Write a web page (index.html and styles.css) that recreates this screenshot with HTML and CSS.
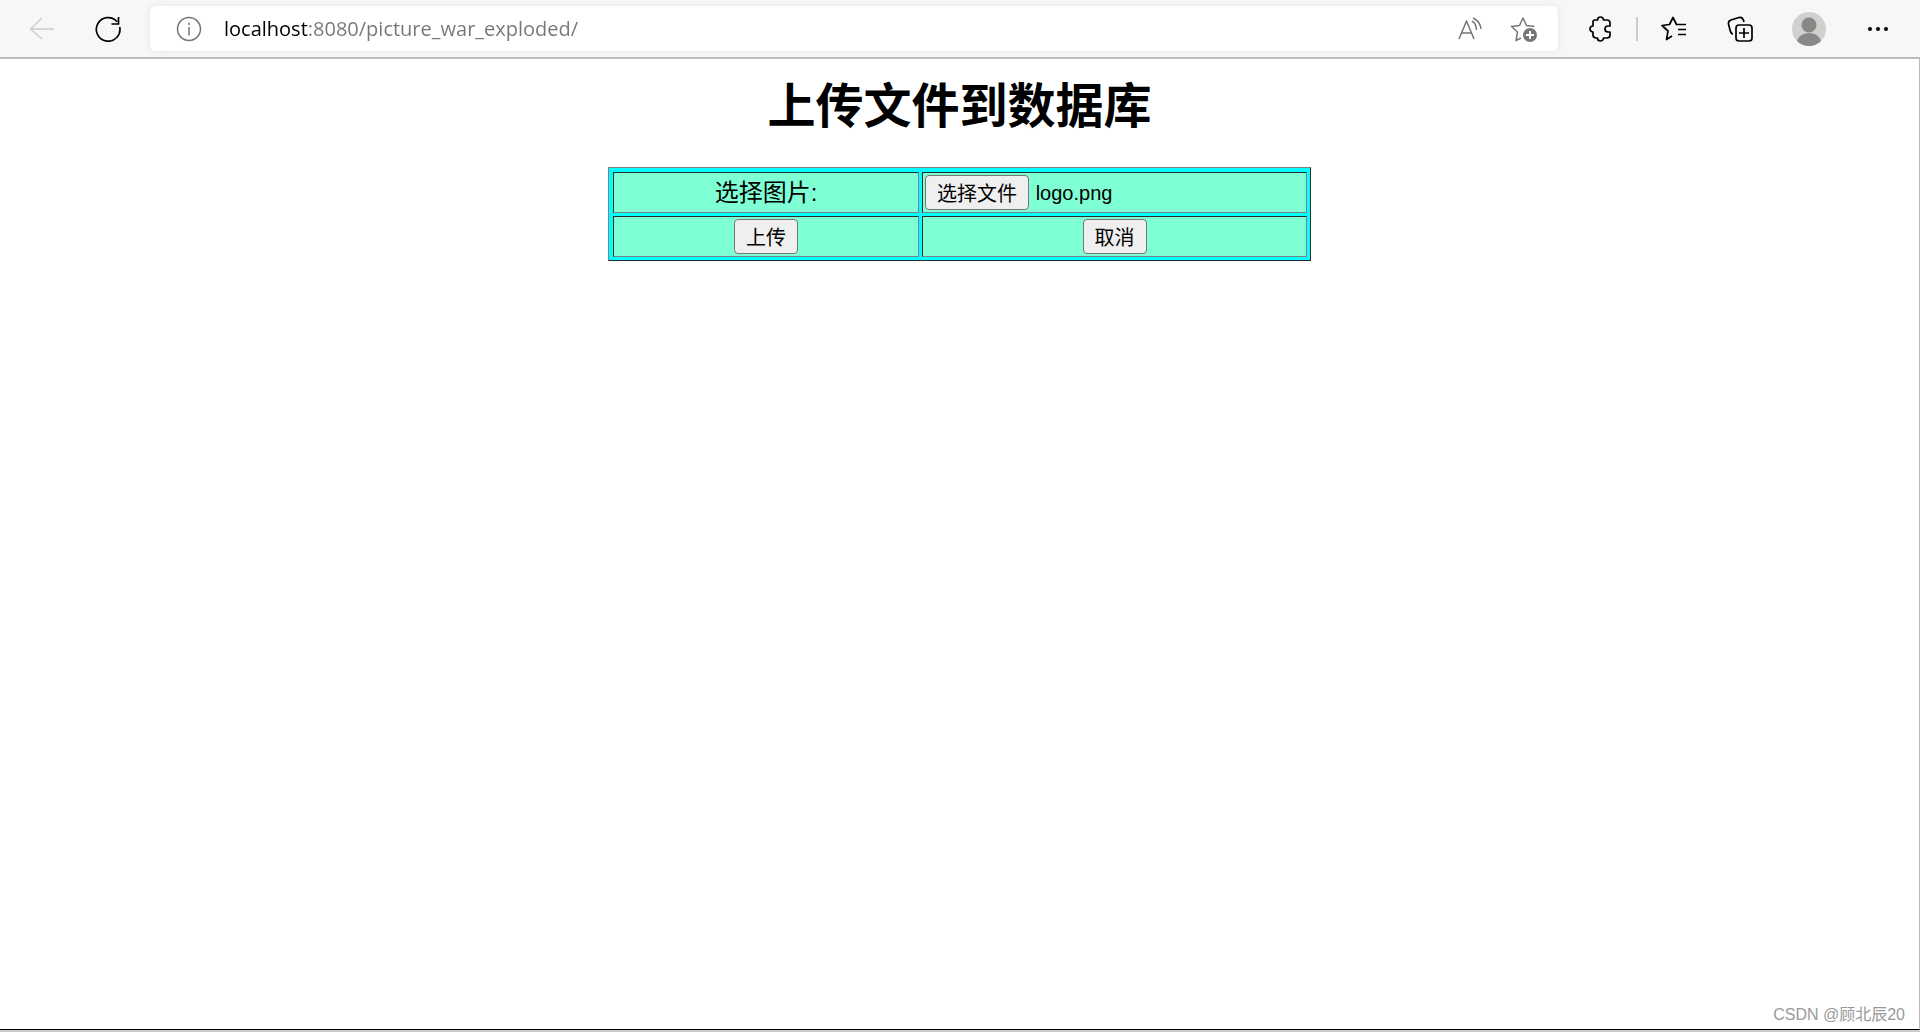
FILE: index.html
```html
<!DOCTYPE html>
<html lang="zh-CN">
<head>
<meta charset="utf-8">
<title>上传文件到数据库</title>
<link rel="stylesheet" href="styles.css">
</head>
<body>
<header class="toolbar">
  <button class="tool back" type="button" aria-label="后退" disabled>
    <svg width="26" height="24" viewBox="0 0 26 24"><path d="M25 12H2M13 1L1.500 12L13 22"/></svg>
  </button>
  <button class="tool" type="button" aria-label="刷新">
    <svg class="bold" width="26" height="26" viewBox="0 0 26 26"><path d="M24.700 11A11.800 11.800 0 1 1 22 5.600M23.500 1v7h-7"/></svg>
  </button>
  <div class="address">
    <button class="tool info" type="button" aria-label="网站信息">
      <svg width="26" height="26" viewBox="0 0 26 26"><circle cx="13" cy="13" r="11.500"/><path d="M13 11v8.500M13 6.500v2.500"/></svg>
    </button>
    <input class="url" type="text" aria-label="地址" value="localhost:8080/picture_war_exploded/">
    <button class="tool" type="button" aria-label="大声朗读">
      <svg width="26" height="24" viewBox="0 0 26 24"><path d="M1 22L8.500 4L16 22M4 16h9.500M14 4Q18 6 18.500 13M15 1Q22 4 23 12"/></svg>
    </button>
    <button class="tool" type="button" aria-label="添加到收藏夹">
      <svg width="28" height="26" viewBox="0 0 28 26"><path d="M11 22L6 24.500L7.500 16L1.500 10.500L9.500 9.500L13 2L16.500 9.500L24.500 10.500"/><circle class="badge" cx="20" cy="19" r="7"/><path class="plus" d="M20 15v8M16 19h8"/></svg>
    </button>
  </div>
  <div class="actions">
    <button class="tool" type="button" aria-label="扩展">
      <svg class="bold" width="26" height="26" viewBox="0 0 26 26"><path d="M7 4H9.500A3 3 0 0 1 15.500 4H19Q22 4 22 7V10H20A3 3 0 0 0 20 16H22V19Q22 22 19 22H15.500A3 3 0 0 1 9.500 22H8Q5 22 5 19V16A3 3 0 0 1 5 10V6Q5 4 7 4Z"/></svg>
    </button>
    <span class="divider"></span>
    <button class="tool" type="button" aria-label="收藏夹">
      <svg class="bold" width="28" height="26" viewBox="0 0 28 26"><path d="M12 20L6.500 23.500L8 15L2 9.500L9.500 8.500L13 1.500L16.500 8.500H26M18 13.500H26M18 18.500H26"/></svg>
    </button>
    <button class="tool" type="button" aria-label="集锦">
      <svg class="bold" width="26" height="26" viewBox="0 0 26 26"><path d="M6 18Q4 18 3 14L1.500 8Q1 5 4 4L12 1.500Q16 1 17 6"/><rect x="9" y="9" width="16" height="16" rx="3"/><path d="M17 12v10M12 17h10"/></svg>
    </button>
    <button class="tool profile" type="button" aria-label="用户资料">
      <svg width="34" height="34" viewBox="0 0 34 34"><circle class="disc" cx="17" cy="17" r="17"/><circle class="person" cx="17" cy="13" r="7.500"/><path class="person" d="M5 29Q8 21 17 21T29 29Q24 34 17 34T5 29Z"/></svg>
    </button>
    <button class="tool" type="button" aria-label="设置及其他">
      <svg class="dots" width="22" height="6" viewBox="0 0 22 6"><circle cx="3" cy="3" r="2"/><circle cx="11" cy="3" r="2"/><circle cx="19" cy="3" r="2"/></svg>
    </button>
  </div>
</header>
<main class="page">
  <h1 class="title">上传文件到数据库</h1>
  <form>
    <table class="upload">
      <tr>
        <td class="name"><label for="picture">选择图片:</label></td>
        <td class="picker">
          <input id="picture" type="file" accept="image/*" hidden>
          <button class="btn" id="choose" type="button">选择文件</button>
          <output id="filename" for="picture">logo.png</output>
        </td>
      </tr>
      <tr>
        <td><button class="btn" type="submit">上传</button></td>
        <td><button class="btn" type="reset">取消</button></td>
      </tr>
    </table>
  </form>
  <footer class="watermark">CSDN @顾北辰20</footer>
</main>
<script src="script.js"></script>
</body>
</html>
```
FILE: styles.css
```css
* {
  box-sizing: border-box;
}

body {
  margin: 0;
  min-height: 100vh;
  display: flex;
  flex-direction: column;
  background: #fff;
  color: #000;
  font-family: "Liberation Sans", "Noto Sans CJK SC", sans-serif;
}

.toolbar {
  display: flex;
  align-items: center;
  height: 59px;
  padding: 0 31px 0 29px;
  background: #f7f7f7;
  border-bottom: 2px solid #bbb;
}

.tool {
  display: flex;
  flex: none;
  padding: 0;
  border: 0;
  background: none;
}

.tool svg {
  fill: none;
  stroke: #767676;
  stroke-width: 1.5;
  stroke-linejoin: round;
}

.back {
  margin-right: 40px;
}

.tool.back svg {
  stroke: #ccc;
}

.tool .bold {
  stroke: #000;
  stroke-width: 1.7;
}

.address {
  flex: 1;
  display: flex;
  align-items: center;
  gap: 26px;
  height: 45px;
  margin: 0 30px 0 29px;
  padding: 0 20px 0 26px;
  background: #fff;
  border-radius: 6px;
  box-shadow: 0 0 6px #e4e4e4;
}

.info {
  margin-right: -4px;
}

.url {
  flex: 1;
  min-width: 0;
  padding: 0;
  border: 0;
  outline: 0;
  font: 20px/28px "Open Sans", sans-serif;
  background: linear-gradient(90deg, #000 84px, #767676 84px);
  background-clip: text;
  -webkit-background-clip: text;
  -webkit-text-fill-color: transparent;
}

.tool .badge {
  fill: #767676;
  stroke: none;
}

.tool .plus {
  stroke: #fff;
  stroke-width: 2;
}

.actions {
  display: flex;
  align-items: center;
}

.divider {
  width: 2px;
  height: 24px;
  margin: 0 22px;
  background: #ccc;
}

.actions .tool + .tool {
  margin-left: 39px;
}

.profile {
  margin-right: 2px;
}

.tool .disc {
  fill: #d2d0ce;
  stroke: none;
}

.tool .person {
  fill: #8a8886;
  stroke: none;
}

.tool .dots {
  fill: #000;
  stroke: none;
}

.page {
  flex: 1;
  display: flex;
  flex-direction: column;
  padding-top: 12px;
  border-right: 1px solid #bbb;
  border-bottom: 1px solid #000;
  box-shadow: 0 2px #ccc;
  margin-bottom: 2px;
}

.title {
  margin: 0 0 24px;
  font-size: 48px;
  line-height: 72px;
  text-align: center;
}

.upload {
  width: 703px;
  max-width: 100%;
  margin: 0 auto;
  padding: 1px 0 0 1px;
  table-layout: fixed;
  border: 1px solid;
  border-color: #808080 #2b2b2b #2b2b2b #808080;
  border-spacing: 3px;
  background: #0ff;
  font-size: 24px;
  line-height: 35px;
}

.upload td {
  height: 41px;
  padding: 2px;
  border: 1px solid;
  border-color: #2b2b2b #808080 #808080 #2b2b2b;
  background: #7fffd4;
  text-align: center;
}

.upload .name {
  width: 306px;
}

.upload .picker {
  text-align: left;
}

.btn {
  display: block;
  height: 35px;
  margin: 0 auto;
  padding: 0 11px;
  border: 1px solid #767676;
  border-radius: 4px;
  background: #efefef;
  color: #000;
  font: 20px/32px "Noto Sans CJK SC", sans-serif;
}

.picker .btn {
  display: inline-block;
  vertical-align: top;
}

.picker output {
  display: inline-block;
  padding-top: 2px;
  vertical-align: top;
  font-size: 20px;
  line-height: 33px;
}

.watermark {
  margin-top: auto;
  padding: 0 14px 3px;
  color: #999;
  font-size: 16px;
  line-height: 22px;
  text-align: right;
}
```
FILE: script.js
```javascript
const picture = document.getElementById("picture");
const filename = document.getElementById("filename");

document.getElementById("choose").addEventListener("click", () => picture.click());

picture.addEventListener("change", () => {
  filename.textContent = picture.files.length ? picture.files[0].name : "";
});
```
